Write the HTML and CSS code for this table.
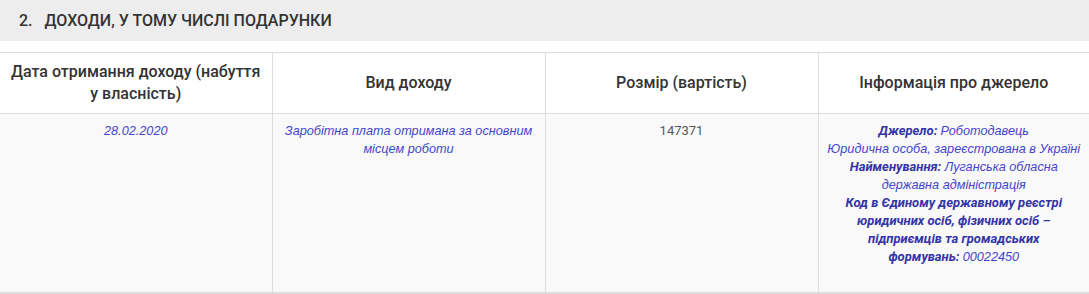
FILE: index.html
```html
<!DOCTYPE html>
<html lang="uk">
<head>
<meta charset="utf-8">
<link rel="stylesheet" href="styles.css">
</head>
<body>
<div class="section-title"><span class="num">2.</span>ДОХОДИ, У ТОМУ ЧИСЛІ ПОДАРУНКИ</div>
<table class="income">
  <colgroup>
    <col class="c1"><col class="c2"><col class="c3"><col>
  </colgroup>
  <thead>
    <tr>
      <th>Дата отримання доходу (набуття у власність)</th>
      <th>Вид доходу</th>
      <th>Розмір (вартість)</th>
      <th>Інформація про джерело</th>
    </tr>
  </thead>
  <tbody>
    <tr>
      <td><span class="val">28.02.2020</span></td>
      <td><span class="val">Заробітна плата отримана за основним місцем роботи</span></td>
      <td><span class="num-val">147371</span></td>
      <td class="info">
        <span class="lbl">Джерело:</span> <span class="val">Роботодавець</span><br>
        <span class="val">Юридична особа, зареєстрована в Україні</span><br>
        <span class="lbl">Найменування:</span> <span class="val">Луганська обласна державна&nbsp;адміністрація</span><br>
        <span class="lbl">Код в Єдиному державному реєстрі юридичних осіб, фізичних осіб – підприємців та громадських формувань:</span>&nbsp;<span class="val">00022450</span>
      </td>
    </tr>
  </tbody>
</table>
</body>
</html>
```
FILE: styles.css
```css
html, body {
  margin: 0;
  padding: 0;
  background: #ffffff;
  font-family: Roboto, "Liberation Sans", sans-serif;
}
.section-title {
  background: #ededed;
  height: 41px;
  line-height: 41px;
  padding-left: 19px;
  font-size: 16px;
  font-weight: 500;
  color: #333333;
  margin-bottom: 11px;
}
.section-title .num {
  margin-right: 12px;
}
.income {
  width: 100%;
  table-layout: fixed;
  border-collapse: collapse;
}
.c1 { width: 272px; }
.c2 { width: 273px; }
.c3 { width: 273px; }
.income th,
.income td {
  border-left: 1px solid #dcdcdc;
  text-align: center;
}
.income th:first-child,
.income td:first-child {
  border-left: none;
}
.income thead tr {
  border-top: 1px solid #dcdcdc;
  border-bottom: 1px solid #dcdcdc;
}
.income th {
  background: #ffffff;
  font-size: 16px;
  font-weight: 500;
  color: #333333;
  line-height: 22px;
  padding: 8px 10px 8px;
  height: 44px;
}
.income tbody tr {
  border-bottom: 2px solid #dcdcdc;
}
.income td {
  background: #f9f9f9;
  vertical-align: top;
  font-size: 13px;
  line-height: 18px;
  padding: 8px 6px 26px;
}
.val {
  font-family: "Liberation Sans", Arial, sans-serif;
  font-size: 12.7px;
  font-style: italic;
  color: #4545cc;
}
.lbl {
  font-family: Roboto, sans-serif;
  font-size: 13px;
  font-style: italic;
  font-weight: 700;
  color: #3434a8;
}
.num-val {
  font-family: Roboto, sans-serif;
  font-size: 13px;
  color: #555555;
}
.info {
  padding-left: 6px;
  padding-right: 6px;
}
```
